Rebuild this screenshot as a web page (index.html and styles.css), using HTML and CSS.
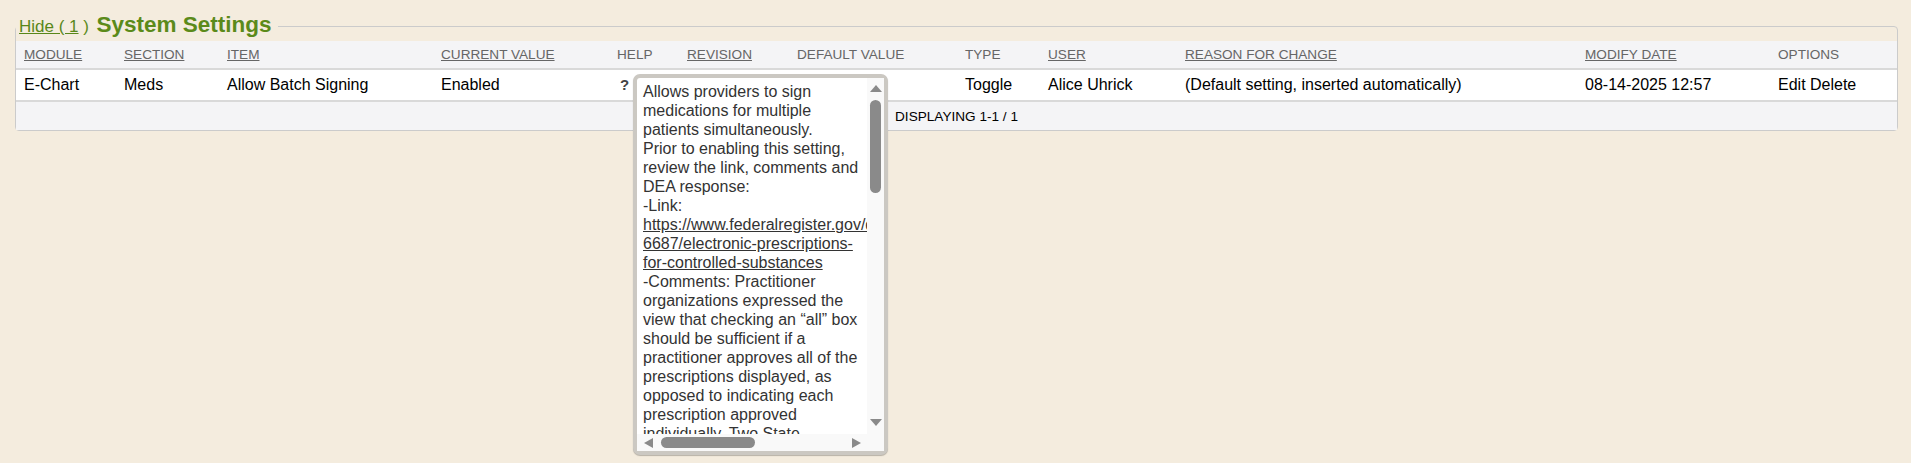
FILE: index.html
```html
<!DOCTYPE html>
<html>
<head>
    <meta charset="UTF-8">
    <title>System Settings</title>
    <link rel="stylesheet" href="styles.css">
</head>
<body>
    <div class="panel-wrap">
        <fieldset class="panel">
            <legend class="panel-title"><a href="#" class="toggle">Hide ( 1</a><span class="toggle-end"> )</span> <span class="title-text">System Settings</span></legend>
            <table class="grid">
                <colgroup>
                    <col style="width:100px">
                    <col style="width:103px">
                    <col style="width:214px">
                    <col style="width:176px">
                    <col style="width:70px">
                    <col style="width:110px">
                    <col style="width:168px">
                    <col style="width:83px">
                    <col style="width:137px">
                    <col style="width:400px">
                    <col style="width:193px">
                    <col style="width:127px">
                </colgroup>
                <thead>
                    <tr>
                        <th><a href="#">MODULE</a></th>
                        <th><a href="#">SECTION</a></th>
                        <th><a href="#">ITEM</a></th>
                        <th><a href="#">CURRENT VALUE</a></th>
                        <th>HELP</th>
                        <th><a href="#">REVISION</a></th>
                        <th>DEFAULT VALUE</th>
                        <th>TYPE</th>
                        <th><a href="#">USER</a></th>
                        <th><a href="#">REASON FOR CHANGE</a></th>
                        <th><a href="#">MODIFY DATE</a></th>
                        <th>OPTIONS</th>
                    </tr>
                </thead>
                <tbody>
                    <tr class="row">
                        <td>E-Chart</td>
                        <td>Meds</td>
                        <td>Allow Batch Signing</td>
                        <td>Enabled</td>
                        <td><span class="help-mark">?</span></td>
                        <td>1</td>
                        <td>Enabled</td>
                        <td>Toggle</td>
                        <td>Alice Uhrick</td>
                        <td>(Default setting, inserted automatically)</td>
                        <td>08-14-2025 12:57</td>
                        <td>Edit Delete</td>
                    </tr>
                </tbody>
                <tfoot>
                    <tr>
                        <td colspan="12" class="pager">DISPLAYING 1-1 / 1</td>
                    </tr>
                </tfoot>
            </table>
        </fieldset>

        <div class="help-pop">
            <div class="help-body">
                Allows providers to sign medications for multiple patients simultaneously.<br>
                Prior to enabling this setting, review the link, comments and DEA response:<br>
                -Link: <a href="#">https://www.federalregister.gov/documents/2010/03/31/2010-6687/electronic-prescriptions-for-controlled-substances</a><br>
                -Comments: Practitioner organizations expressed the view that checking an “all” box should be sufficient if a practitioner approves all of the prescriptions displayed, as opposed to indicating each prescription approved individually. Two State pharmacy boards supported this view.<br>
                -DEA response: DEA has revised the rule to allow a practitioner to sign several prescriptions at once.
            </div>
            <div class="vbar">
                <span class="arrow arrow-up"></span>
                <span class="thumb"></span>
                <span class="arrow arrow-down"></span>
            </div>
            <div class="hbar">
                <span class="arrow arrow-left"></span>
                <span class="thumb"></span>
                <span class="arrow arrow-right"></span>
            </div>
            <div class="corner"></div>
        </div>
    </div>
</body>
</html>
```

FILE: styles.css
```css
html, body {
    min-height: 100vh;
}
body {
    margin: 0;
    background-color: #f4ecde;
    font-family: "Liberation Sans", Arial, sans-serif;
    font-size: 16px;
    color: #000;
}
.panel-wrap {
    position: relative;
    margin: 11px 13px 0 15px;
}
.panel {
    margin: 0;
    padding: 0;
    border: 1px solid #cbcbcb;
    border-radius: 4px;
    min-width: 0;
}
.panel-title {
    margin-left: 0;
    padding: 0 7px 0 3px;
    line-height: 28px;
    color: #5b8a1a;
}
.toggle {
    color: #588719;
    font-size: 17px;
    text-decoration: underline;
}
.toggle-end {
    font-size: 17px;
}
.title-text {
    font-size: 22.5px;
    font-weight: bold;
    margin-left: 3px;
}
.grid {
    width: 100%;
    table-layout: fixed;
    border-collapse: collapse;
}
.grid th {
    height: 26px;
    padding: 0 8px 1px;
    background-color: #f4f4f6;
    border-bottom: 2px solid #d9d9d9;
    font-size: 13.6px;
    font-weight: normal;
    text-align: left;
    color: #666;
    white-space: nowrap;
}
.grid th a {
    color: #666;
    text-decoration: underline;
}
.row td {
    height: 30px;
    padding: 0 8px;
    background-color: #fff;
    border-bottom: 2px solid #d9d9d9;
    white-space: nowrap;
}
.help-mark {
    margin-left: 3px;
    font-size: 15px;
    font-weight: bold;
    color: #444;
}
.help-pop {
    position: absolute;
    left: 618px;
    top: 63px;
    z-index: 2;
    width: 247px;
    height: 373px;
    display: grid;
    grid-template-columns: 230px 17px;
    grid-template-rows: 356px 17px;
    background-color: #fff;
    border: 4px solid #cbc8c2;
    border-radius: 7px;
    box-shadow: 0 1px 1px rgba(0, 0, 0, 0.25);
}
.help-body {
    overflow: hidden;
    padding: 4px 0 0 6px;
    font-size: 16px;
    line-height: 19px;
    color: #333;
}
.help-body a {
    color: #333;
}
.vbar, .hbar, .corner {
    background-color: #f9f9f9;
}
.vbar {
    display: flex;
    flex-direction: column;
    align-items: center;
    padding: 7px 0 8px;
}
.vbar .thumb {
    width: 11px;
    height: 93px;
    margin-top: 8px;
    margin-bottom: auto;
    border-radius: 6px;
    background-color: #8a8a8a;
}
.hbar {
    display: flex;
    align-items: center;
    padding: 0 6px 0 7px;
}
.hbar .thumb {
    width: 94px;
    height: 11px;
    margin-left: 8px;
    margin-right: auto;
    border-radius: 6px;
    background-color: #8a8a8a;
}
.arrow {
    width: 0;
    height: 0;
}
.arrow-up {
    border-left: 6px solid transparent;
    border-right: 6px solid transparent;
    border-bottom: 7px solid #8a8a8a;
}
.arrow-down {
    border-left: 6px solid transparent;
    border-right: 6px solid transparent;
    border-top: 7px solid #8a8a8a;
}
.arrow-left {
    border-top: 5.5px solid transparent;
    border-bottom: 5.5px solid transparent;
    border-right: 9px solid #8a8a8a;
}
.arrow-right {
    border-top: 5.5px solid transparent;
    border-bottom: 5.5px solid transparent;
    border-left: 9px solid #8a8a8a;
}
.pager {
    height: 28px;
    padding: 0;
    background-color: #f4f4f6;
    text-align: center;
    font-size: 13.6px;
}
```
